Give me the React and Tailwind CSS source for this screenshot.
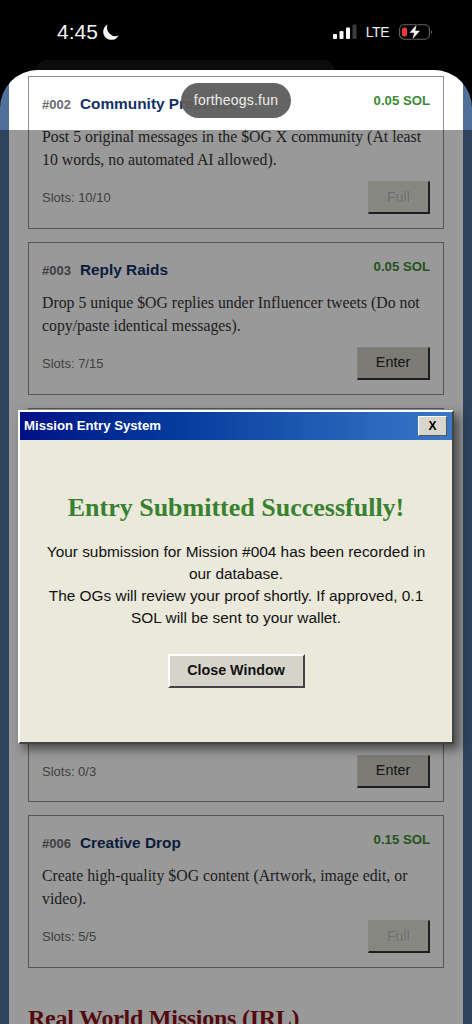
import React from 'react';

const sans = "font-['Liberation_Sans',Arial,sans-serif]";
const serif = "font-['Liberation_Serif','Times_New_Roman',serif]";

function StatusBar() {
  return (
    <div className="h-[70px] flex items-start justify-between pt-[20px] pl-[57px] pr-[39px] text-white">
      <div className="flex items-center gap-[4px]">
        <span className={`${sans} text-[21px] leading-[24px] font-medium text-[#f4f4f4]`}>4:45</span>
        <svg width="17" height="17" viewBox="0 0 17 17" fill="#f5f5f5">
          <path d="M5.6 0.4 A8.2 8.2 0 1 0 16.6 11.6 A8.6 8.6 0 0 1 5.6 0.4 Z" />
        </svg>
      </div>
      <div className="flex items-center h-[24px] gap-[9px]">
        <svg width="24" height="16" viewBox="0 0 24 16">
          <rect x="0" y="10" width="4" height="5" rx="1" fill="#fff" />
          <rect x="6.5" y="7" width="4" height="8" rx="1" fill="#fff" />
          <rect x="13" y="3.5" width="4" height="11.5" rx="1" fill="#fff" />
          <rect x="19.5" y="0.5" width="4" height="14.5" rx="1" fill="#3c3c3c" />
        </svg>
        <span className={`${sans} text-[14px] leading-[24px] tracking-[-0.5px] font-medium text-[#eee]`}>LTE</span>
        <svg width="34" height="16" viewBox="0 0 34 16" className="ml-[1px]">
          <rect x="0.6" y="0.8" width="29.8" height="14.4" rx="4.5" fill="none" stroke="#666" strokeWidth="1.1" />
          <rect x="3" y="3.5" width="5" height="9" rx="2" fill="#f0353b" />
          <path d="M32 6 a2.5 2.5 0 0 1 0 4 z" fill="#666" />
          <path d="M18 0 L10 9 L14.8 9 L13 16 L21.5 6.5 L16.6 6.5 Z" fill="#fff" stroke="#000" strokeWidth="0.6" />
        </svg>
      </div>
    </div>
  );
}

function MissionCard({ id, title, reward, desc, slots, full }) {
  return (
    <div className="border border-[#8f8f8f] h-[153px] shrink-0 px-[13px] pt-[14px] flex flex-col">
      <div className="flex justify-between items-start h-[34px]">
        <div className="flex items-baseline gap-[9px] mt-[1px]">
          <span className={`${sans} text-[13px] font-bold text-[#6a6a72]`}>{id}</span>
          <span className={`${sans} text-[15.4px] font-bold text-[#123067]`}>{title}</span>
        </div>
        <span className={`${sans} text-[13.2px] font-bold text-[#3c8a35]`}>{reward}</span>
      </div>
      <p className={`${serif} text-[15.8px] leading-[23px] text-[#333] h-[46px]`}>{desc}</p>
      <div className="flex items-center justify-between mt-[10px]">
        <span className={`${sans} text-[13px] text-[#6a6a6a]`}>Slots: {slots}</span>
        {full ? (
          <button className={`${sans} w-[62px] h-[33px] text-[14px] bg-[#e2e2d8] text-[#b8b8b4] [text-shadow:1px_1px_0_#eee] border border-[#e2e2d8] border-r-2 border-b-2 border-r-[#333] border-b-[#333]`}>
            Full
          </button>
        ) : (
          <button className={`${sans} w-[73px] h-[33px] text-[14.4px] bg-[#cfcec4] text-[#222] border border-[#d8d8d0] border-r-2 border-b-2 border-r-[#333] border-b-[#333]`}>
            Enter
          </button>
        )}
      </div>
    </div>
  );
}

function EntryModal() {
  return (
    <div className="absolute left-[18px] top-[410px] w-[436px] h-[334px] bg-[#ebe9db] border-2 border-white border-r-[#444] border-b-[#444] shadow-[5px_5px_10px_rgba(0,0,0,0.55)] flex flex-col">
      <div className="h-[28px] shrink-0 bg-gradient-to-r from-[#000f85] to-[#3a78c8] flex items-center justify-between pl-[4px] pr-[5px]">
        <span className={`${sans} text-[13.2px] font-bold text-white`}>Mission Entry System</span>
        <button className={`${sans} w-[29px] h-[20px] bg-[#d8d5cc] text-[12px] font-bold text-black border border-white border-r-[#555] border-b-[#555]`}>
          X
        </button>
      </div>
      <div className="flex flex-col items-center px-[16px] pt-[53px] text-center">
        <h2 className={`${serif} text-[26px] leading-[30px] font-bold text-[#38812f]`}>Entry Submitted Successfully!</h2>
        <p className={`${sans} mt-[18px] text-[15.4px] leading-[22px] text-[#111]`}>
          Your submission for Mission #004 has been recorded in our database.
          <br />
          The OGs will review your proof shortly. If approved, 0.1 SOL will be sent to your wallet.
        </p>
        <button className={`${sans} mt-[25px] w-[137px] h-[34px] bg-[#d6d3ca] text-[14.3px] font-bold text-[#111] border-2 border-white border-r-[#444] border-b-[#444]`}>
          Close Window
        </button>
      </div>
    </div>
  );
}

export default function App() {
  return (
    <div className="relative w-[472px] h-[1024px] overflow-hidden bg-black">
      <StatusBar />
      {/* faint edge of the tab behind the sheet */}
      <div className="absolute left-[35px] top-[60px] w-[300px] h-[12px] rounded-t-[12px] bg-[#0e0c0a]" />
      <div className="relative h-[954px] overflow-hidden rounded-t-[38px] bg-[#4f7099]">
        <div className="mx-[9px] h-full bg-white px-[19px] pt-[6px] flex flex-col gap-[13px]">
          <MissionCard
            id="#002"
            title="Community Presence"
            reward="0.05 SOL"
            desc="Post 5 original messages in the $OG X community (At least 10 words, no automated AI allowed)."
            slots="10/10"
            full
          />
          <MissionCard
            id="#003"
            title="Reply Raids"
            reward="0.05 SOL"
            desc="Drop 5 unique $OG replies under Influencer tweets (Do not copy/paste identical messages)."
            slots="7/15"
          />
          <div className="border border-[#8f8f8f] h-[228px] shrink-0" />
          <div className="border border-[#8f8f8f] h-[153px] shrink-0 flex items-end justify-between px-[13px] pb-[13px]">
            <span className={`${sans} text-[13px] leading-[33px] text-[#6a6a6a]`}>Slots: 0/3</span>
            <button className={`${sans} w-[73px] h-[33px] text-[14.4px] bg-[#cfcec4] text-[#222] border border-[#d8d8d0] border-r-2 border-b-2 border-r-[#333] border-b-[#333]`}>
              Enter
            </button>
          </div>
          <MissionCard
            id="#006"
            title="Creative Drop"
            reward="0.15 SOL"
            desc="Create high-quality $OG content (Artwork, image edit, or video)."
            slots="5/5"
            full
          />
          <h2 className={`${serif} mt-[23px] text-[24px] tracking-[-0.25px] leading-[28px] font-bold text-[#8a0f18] whitespace-nowrap`}>Real World Missions (IRL)</h2>
        </div>
        {/* dim layer, the top strip of the page stays bright */}
        <div className="absolute left-0 right-0 top-[60px] bottom-0 bg-black/40" />
      </div>
      <EntryModal />
      <div className={`${sans} absolute left-[181px] top-[83px] w-[110px] h-[35px] rounded-full bg-[#5c5c5c]/95 flex items-center justify-center text-[14px] tracking-[0.2px] text-[#eee]`}>
        fortheogs.fun
      </div>
    </div>
  );
}
